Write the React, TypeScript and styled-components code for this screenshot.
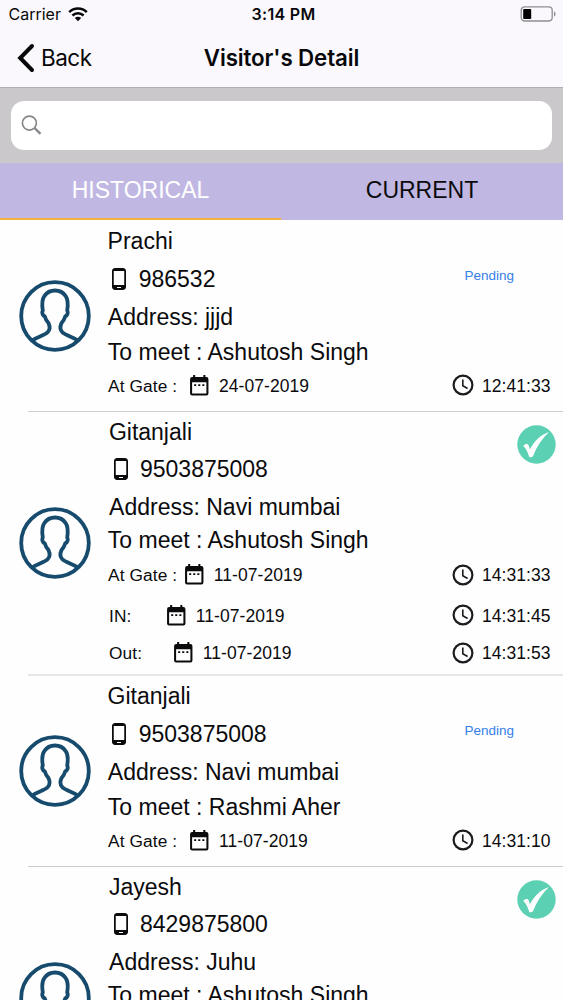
import React from "react";
import styled, { createGlobalStyle } from "styled-components";

const GlobalStyle = createGlobalStyle`
  * { box-sizing: border-box; }
  html, body { margin: 0; padding: 0; height: 100%; overflow: hidden; }
  body { background: #fefefe; color: #0b0b0d; font-family: "Liberation Sans", Arial, sans-serif; }
`;

const Screen = styled.div`
  width: 100%;
  height: 1000px;
  overflow: hidden;
  display: flex;
  flex-direction: column;
`;

const Header = styled.header`
  flex: none;
  height: 88px;
  background: #faf8fc;
  border-bottom: 1px solid #b1afb2;
  font-family: Inter, sans-serif;
  color: #08080a;
`;

const StatusBar = styled.div`
  height: 29px;
  display: grid;
  grid-template-columns: 1fr auto 1fr;
  align-items: center;
  padding: 0 7px 0 8.5px;
`;

const Carrier = styled.div`
  display: flex;
  align-items: center;
  gap: 7px;
  font-size: 16px;
  line-height: 29px;
`;

const Clock = styled.div`
  padding-left: 2.5px;
  font-size: 16px;
  line-height: 29px;
  font-weight: 600;
  letter-spacing: 0.3px;
`;

const BatteryIcon = styled.svg`
  justify-self: end;
  margin-top: -1px;
`;

const NavBar = styled.div`
  height: 58px;
  display: grid;
  grid-template-columns: 1fr auto 1fr;
  align-items: center;
  padding: 0 17px;
`;

const BackButton = styled.button`
  display: flex;
  align-items: center;
  gap: 6px;
  padding: 0;
  border: 0;
  background: none;
  color: inherit;
  font: 400 22.5px/30px Inter, sans-serif;
  letter-spacing: -0.5px;
`;

const Title = styled.h1`
  margin: 0;
  font-size: 22.3px;
  line-height: 30px;
  font-weight: 600;
  letter-spacing: -0.1px;
`;

const SearchArea = styled.div`
  flex: none;
  height: 75px;
  padding: 13px 11px;
  background: #cac8cb;
`;

const SearchBox = styled.div`
  height: 49px;
  border-radius: 13px;
  background: #fff;
  display: flex;
  align-items: center;
  padding-left: 10px;
`;

const Tabs = styled.nav`
  flex: none;
  display: grid;
  grid-template-columns: 281px 1fr;
  height: 57px;
  background: #c1b7e3;
`;

const Tab = styled.button<{ $active?: boolean }>`
  border: 0;
  border-bottom: 2px solid ${(p) => (p.$active ? "#f3b13a" : "transparent")};
  padding: 0;
  background: none;
  font: 23px/53px "Liberation Sans", Arial, sans-serif;
  color: ${(p) => (p.$active ? "#fff" : "#0b0b0d")};
`;

const List = styled.main`
  flex: 1;
  min-height: 0;
  overflow: hidden;
`;

const Card = styled.article<{ $height: number; $pad: number }>`
  display: flex;
  height: ${(p) => p.$height}px;
  padding-top: ${(p) => p.$pad}px;
`;

const AvatarColumn = styled.div<{ $pad: number }>`
  width: 107px;
  margin-top: -${(p) => p.$pad}px;
  padding-left: 18.5px;
  display: flex;
  align-items: center;
`;

const Divider = styled.hr<{ $soft?: boolean }>`
  margin: 0 0 0 28px;
  border: 0;
  height: ${(p) => (p.$soft ? 2 : 1)}px;
  background: ${(p) => (p.$soft ? "#e8e7e8" : "#cfcdcf")};
`;

const Body = styled.div`
  flex: 1;
  min-width: 0;
`;

const Summary = styled.div`
  display: flex;
  justify-content: space-between;
`;

const Line = styled.div<{ $h: number; $indent?: number }>`
  display: flex;
  align-items: center;
  height: ${(p) => p.$h}px;
  padding-left: ${(p) => p.$indent ?? 0}px;
  font-size: 23px;
  line-height: ${(p) => p.$h}px;
  white-space: nowrap;

  svg { margin-top: -1px; }
`;

const PhoneNumber = styled.span`
  margin-left: 7.3px;
`;

const Pending = styled.div`
  margin: 42.5px 49px 0 0;
  font-size: 13.5px;
  line-height: 20px;
  color: #3380e6;
`;

const Approved = styled.svg`
  margin: 11.5px 7px 0 0;
`;

const StampRow = styled.div<{ $h: number; $indent?: number }>`
  display: flex;
  align-items: center;
  height: ${(p) => p.$h}px;
  padding-left: ${(p) => p.$indent ?? 0}px;
  padding-right: 12.5px;
  font-size: 17.5px;
  line-height: 24px;
  white-space: nowrap;

  span { padding-top: 1.5px; }
`;

const StampLabel = styled.span<{ $w: number }>`
  width: ${(p) => p.$w}px;
  font-size: 17.3px;
  letter-spacing: 0.12px;
`;

const StampDate = styled.span`
  flex: 1;
  margin-left: 7.3px;
  letter-spacing: 0.06px;
`;

const StampTime = styled.span`
  margin-left: 8px;
  letter-spacing: 0.05px;
`;

const WifiIcon = () => (
  <svg width="20" height="15" viewBox="0 0 20 15" fill="none" stroke="#08080a" strokeWidth="2.5">
    <path d="M1.2 5.2C6 .4 14 .4 18.8 5.2" />
    <path d="M4.4 8.5c3.2-3 8-3 11.2 0" />
    <path d="M10 14.2 6.8 11c1.8-1.6 4.6-1.6 6.4 0z" fill="#08080a" stroke="none" />
  </svg>
);

const Battery = () => (
  <BatteryIcon width="36" height="16" viewBox="0 0 36 16">
    <rect x="1.2" y="0.8" width="31" height="14.2" rx="3.4" fill="none" stroke="#8f8e92" strokeWidth="1.3" />
    <rect x="3.2" y="3" width="8" height="10" rx="0.8" fill="#000" />
    <path d="M34 5.4c2 .6 2 4.4 0 5z" fill="#8f8e92" />
  </BatteryIcon>
);

const BackChevron = () => (
  <svg width="18" height="30" viewBox="0 0 18 30" fill="none" stroke="#08080a" strokeWidth="4" strokeLinecap="round" strokeLinejoin="miter">
    <path d="M15 3 3.2 15l11.8 12" />
  </svg>
);

const SearchIcon = () => (
  <svg width="22" height="21" viewBox="0 0 22 21" fill="none" stroke="#858488">
    <circle cx="8.4" cy="8.1" r="7" strokeWidth="1.6" />
    <path d="m13.3 12.8 6.2 6.1" strokeWidth="2.3" />
  </svg>
);

const Avatar = () => (
  <svg width="72" height="72" viewBox="0 0 72 72" fill="none" stroke="#174b6d" strokeLinejoin="round">
    <circle cx="36" cy="36" r="33.8" strokeWidth="3.8" />
    <path
      strokeWidth="3.8"
      d="M13 60.5C18 57 25 55.5 28.5 52.400c2.600-2.600 2.300-6.500 1-9.300-1.900-2.200-3.100-4.200-3.700-6.700-2.300-.7-3.200-4-2-6-.8-5-1.200-10.500 1.500-14.300C27.800 12.300 31.500 10.500 36 10.500s8.200 1.800 10.700 5.600c2.700 3.800 2.300 9.300 1.500 14.300 1.200 2 .3 5.300-2 6-.6 2.500-1.800 4.500-3.700 6.700-1.300 2.800-1.600 6.700 1 9.300C47 55.500 54 57 59 60.500"
    />
  </svg>
);

const PhoneIcon = () => (
  <svg width="24" height="24" viewBox="0 0 24 24" fill="#0b0b0d">
    <path d="M16 1H8C6.34 1 5 2.34 5 4v16c0 1.66 1.34 3 3 3h8c1.66 0 3-1.34 3-3V4c0-1.66-1.34-3-3-3zm-2 20h-4v-1h4v1zm3.25-3H6.75V4h10.5v14z" />
  </svg>
);

const CalendarIcon = () => (
  <svg width="24.5" height="24.5" viewBox="0 0 24 24" fill="#0b0b0d">
    <path d="M5 4h1V2h2v2h8V2h2v2h1a2 2 0 0 1 2 2v14a2 2 0 0 1-2 2H5a2 2 0 0 1-2-2V6a2 2 0 0 1 2-2zm0 5v11h14V9z" fillRule="evenodd" />
    <path d="M7 11h2v1.7H7zM11 11h2v1.7h-2zM15 11h2v1.7h-2z" />
  </svg>
);

const ClockIcon = () => (
  <svg width="22" height="22" viewBox="0 0 22 22" fill="none" stroke="#1c1b1f">
    <circle cx="11" cy="11" r="9.4" strokeWidth="2.2" />
    <path d="M10.8 5.5v6.3l4.8 2.7" strokeWidth="1.6" />
  </svg>
);

const ApprovedIcon = () => (
  <Approved width="39" height="39" viewBox="0 0 39 39">
    <circle cx="19.5" cy="19.5" r="19.2" fill="#5bd0b3" />
    <path d="M6.3 21c.9-1.700 2.900-2.300 4.300-1.900 1.200 1.200 1.800 3 2.300 5.200C17 16.500 23.500 9.500 32 7c-7 6.600-12.300 14.600-16 24.300-1 .8-2.500 1-3.700.9C11 27.700 9.500 23.800 6.300 21z" fill="#fff" />
  </Approved>
);

interface Stamp {
  label: string;
  labelWidth: number;
  height: number;
  indent?: number;
  date: string;
  time: string;
}

interface Visitor {
  name: string;
  phone: string;
  address: string;
  host: string;
  approved?: boolean;
  stamps: Stamp[];
  height: number;
  pad: number;
}

const gate = (date: string, time: string): Stamp => ({
  label: "At Gate :", labelWidth: 79.2, height: 36, indent: 1, date, time,
});

const approvedStamps = (times: string[]): Stamp[] => [
  { label: "At Gate :", labelWidth: 74, height: 41, indent: 1, date: "11-07-2019", time: times[0] },
  { label: "IN:", labelWidth: 55, height: 40, indent: 2, date: "11-07-2019", time: times[1] },
  { label: "Out:", labelWidth: 62, height: 35, indent: 2, date: "11-07-2019", time: times[2] },
];

const visitors: Visitor[] = [
  { name: "Prachi", phone: "986532", address: "jjjd", host: "Ashutosh Singh", stamps: [gate("24-07-2019", "12:41:33")], height: 191, pad: 3 },
  { name: "Gitanjali", phone: "9503875008", address: "Navi mumbai", host: "Ashutosh Singh", approved: true, stamps: approvedStamps(["14:31:33", "14:31:45", "14:31:53"]), height: 262, pad: 1 },
  { name: "Gitanjali", phone: "9503875008", address: "Navi mumbai", host: "Rashmi Aher", stamps: [gate("11-07-2019", "14:31:10")], height: 190, pad: 2 },
  { name: "Jayesh", phone: "8429875800", address: "Juhu", host: "Ashutosh Singh", approved: true, stamps: approvedStamps(["14:31:33", "14:31:45", "14:31:53"]), height: 262, pad: 1 },
];

const VisitorCard = ({ visitor: v }: { visitor: Visitor }) => {
  const [nameH, phoneH, addressH, hostH] = v.approved ? [38, 37, 39, 27] : [37, 38, 39, 30];
  const shift = v.approved ? 1.3 : 0;
  return (
    <>
      <Card $height={v.height} $pad={v.pad}>
        <AvatarColumn $pad={v.pad}><Avatar /></AvatarColumn>
        <Body>
          <Summary>
            <div>
              <Line $h={nameH} $indent={shift + 0.6}>{v.name}</Line>
              <Line $h={phoneH} $indent={shift + 0.4}><PhoneIcon /><PhoneNumber>{v.phone}</PhoneNumber></Line>
              <Line $h={addressH} $indent={shift + 0.8}>Address: {v.address}</Line>
              <Line $h={hostH} $indent={0.8}>To meet : {v.host}</Line>
            </div>
            {v.approved ? <ApprovedIcon /> : <Pending>Pending</Pending>}
          </Summary>
          {v.stamps.map((s) => (
            <StampRow key={s.label} $h={s.height} $indent={s.indent}>
              <StampLabel $w={s.labelWidth}>{s.label}</StampLabel>
              <CalendarIcon />
              <StampDate>{s.date}</StampDate>
              <ClockIcon />
              <StampTime>{s.time}</StampTime>
            </StampRow>
          ))}
        </Body>
      </Card>
      <Divider $soft={v.height === 262} />
    </>
  );
};

export default function App() {
  return (
    <Screen>
      <GlobalStyle />
      <Header>
        <StatusBar>
          <Carrier>Carrier <WifiIcon /></Carrier>
          <Clock>3:14 PM</Clock>
          <Battery />
        </StatusBar>
        <NavBar>
          <BackButton><BackChevron />Back</BackButton>
          <Title>Visitor's Detail</Title>
        </NavBar>
      </Header>
      <SearchArea>
        <SearchBox><SearchIcon /></SearchBox>
      </SearchArea>
      <Tabs>
        <Tab $active>HISTORICAL</Tab>
        <Tab>CURRENT</Tab>
      </Tabs>
      <List>
        {visitors.map((v, i) => <VisitorCard key={i} visitor={v} />)}
      </List>
    </Screen>
  );
}
